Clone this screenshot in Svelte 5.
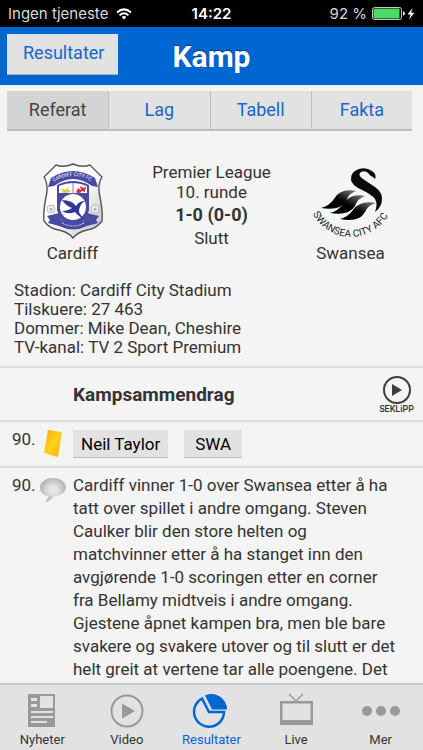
<script lang="ts">
  type Tab = { id: string; label: string };

  const sections: Tab[] = [
    { id: "referat", label: "Referat" },
    { id: "lag", label: "Lag" },
    { id: "tabell", label: "Tabell" },
    { id: "fakta", label: "Fakta" },
  ];

  const menu: Tab[] = [
    { id: "nyheter", label: "Nyheter" },
    { id: "video", label: "Video" },
    { id: "resultater", label: "Resultater" },
    { id: "live", label: "Live" },
    { id: "mer", label: "Mer" },
  ];

  const facts = [
    "Stadion: Cardiff City Stadium",
    "Tilskuere: 27 463",
    "Dommer: Mike Dean, Cheshire",
    "TV-kanal: TV 2 Sport Premium",
  ];

  let section = $state("referat");
  let page = $state("resultater");
</script>

<div class="app">
  <div class="status">
    <span class="carrier">
      Ingen tjeneste
      <svg width="16" height="12" viewBox="0 0 16 12" fill="none" stroke="#fff" stroke-width="2">
        <path d="M1 4.4Q8 -1.6 15 4.4" />
        <path d="M3.6 7.2Q8 3.4 12.4 7.2" />
        <path d="M5.6 9Q8 7 10.4 9L8 11.6Z" fill="#fff" stroke="none" />
      </svg>
    </span>
    <strong>14:22</strong>
    <span class="power">
      92 %
      <svg width="43" height="14" viewBox="0 0 43 14">
        <rect x="0.5" y="0.5" width="29" height="12" rx="2" fill="none" stroke="#c8c8c8" />
        <rect x="1.5" y="1.5" width="26" height="10" fill="#4cd964" />
        <path d="M31 4.2Q33 5 33 6.5T31 8.8Z" fill="#fff" />
        <path d="M40.5 1L35.5 7.4H38.6L37 12.4L42.4 5.8H39.2Z" fill="#fff" />
      </svg>
    </span>
  </div>

  <header>
    <button class="back">Resultater</button>
    <h1>Kamp</h1>
  </header>

  <main>
    <nav class="sections">
      {#each sections as s}
        <button class:active={section === s.id} onclick={() => (section = s.id)}>{s.label}</button>
      {/each}
    </nav>

    <section class="match">
      <div class="team">
        <svg width="62" height="76" viewBox="0 0 62 76">
          <defs>
            <linearGradient id="shield" x1="0" x2="1" y1="0" y2="1">
              <stop offset="0.5" stop-color="#fff" />
              <stop offset="1" stop-color="#b9b9bd" />
            </linearGradient>
            <path id="club" d="M10 20Q31 6 52 20" />
          </defs>
          <path
            d="M14 2Q22 5 31 1Q40 5 48 2L60 14Q55 22 58 34Q61 50 60 58Q54 66 45 67Q36 69 31 75Q26 69 17 67Q8 66 2 58Q1 50 4 34Q7 22 2 14Z"
            fill="url(#shield)" stroke="#55555a" stroke-width="1.4"
          />
          <path d="M9 15Q31 1 53 15L56 24L50 23Q31 9 12 23L6 24Z" fill="#4a4aa5" />
          <text font-size="5" fill="#fff"><textPath href="#club" startOffset="2">CARDIFF CITY FC</textPath></text>
          <path d="M15 22Q31 14 47 22V47Q45 59 31 65Q17 59 15 47Z" fill="#4a4aa5" />
          <path d="M17 23Q31 17 45 23V30H17Z" fill="#fff" />
          <path d="M31 20V31" stroke="#8080bd" />
          <path d="M19 25L24 27L27 23L26 27L30 28L25 30L21 30Z" fill="#d9d43b" />
          <path d="M34 29L36 25L39 27L38 23L42 25L44 23L43 29L40 28L37 31Z" fill="#d93443" />
          <circle cx="31" cy="44" r="13" fill="#fff" />
          <path
            d="M20 37Q30 37 34 43Q37 38 43 38Q39 40 38 44Q36 48 38 51L43 57Q36 53 33 49Q26 52 20 48Q26 48 30 45Q24 43 20 37Z"
            fill="#34349b"
          />
          <path d="M5 53L17 50L20 58Q31 64 42 58L45 50L57 53L54 57L56 60L45 63Q31 70 17 63L6 60L8 57Z" fill="#4a4aa5" />
          <path d="M20 60Q31 66 42 60" fill="none" stroke="#d7d7ef" stroke-dasharray="2 1" />
          <g fill="#f7f7f7" stroke="#b4b4ba">
            <circle cx="9" cy="46" r="4" />
            <circle cx="53" cy="46" r="4" />
          </g>
          <path d="M7 46L9 44L11 46L10 48H8ZM51 46L53 44L55 46L54 48H52Z" fill="#bbb" />
        </svg>
        <span>Cardiff</span>
      </div>

      <div class="result">
        <span>Premier League</span>
        <span>10. runde</span>
        <strong>1-0 (0-0)</strong>
        <span>Slutt</span>
      </div>

      <div class="team">
        <svg width="80" height="76" viewBox="0 0 80 76">
          <defs>
            <linearGradient id="wing" x1="1" x2="0" y1="0" y2="1">
              <stop offset="0.1" stop-color="#666" />
              <stop offset="0.5" stop-color="#000" />
            </linearGradient>
            <path id="arc" d="M1 49A43 43 0 0 0 79 49" />
          </defs>
          <path
            d="M64 16Q66 11 61 8Q55 4 48 6Q39 9 40 17Q41 22 49 26Q60 31 64 36Q67 41 64 49Q71 44 71 36Q71 29 64 24L52 16Q46 12 50 9Q55 7 58 11Q59 13 62 14Z"
            fill="#0a0a0a"
          />
          <path d="M10 45Q18 43 23 36Q29 25 45 28Q38 30 35 38Q30 48 10 45Z" fill="url(#wing)" />
          <path d="M19 50Q27 48 32 41Q39 30 54 33Q47 35 44 43Q38 53 19 50Z" fill="url(#wing)" />
          <path d="M29 56Q37 54 42 47Q49 37 65 40Q57 42 54 49Q48 60 29 56Z" fill="url(#wing)" />
          <text font-size="10" fill="#222"><textPath href="#arc" startOffset="2">SWANSEA CITY AFC</textPath></text>
        </svg>
        <span>Swansea</span>
      </div>
    </section>

    <ul class="facts">
      {#each facts as fact}
        <li>{fact}</li>
      {/each}
    </ul>

    <section class="summary">
      <h2>Kampsammendrag</h2>
      <button class="clip">
        <svg width="30" height="30" viewBox="0 0 30 30">
          <circle cx="15" cy="15" r="13" fill="none" stroke="#3c3c3c" stroke-width="2" />
          <path d="M10 9L20 15L10 21Z" fill="#3c3c3c" />
        </svg>
        <span>SEKLiPP</span>
      </button>
    </section>

    <article class="event">
      <span class="minute">90.</span>
      <svg width="26" height="28" viewBox="0 0 26 28">
        <defs>
          <linearGradient id="card" x1="0" x2="1" y1="0" y2="1">
            <stop offset="0" stop-color="#ffa800" />
            <stop offset="0.5" stop-color="#ffd21c" />
            <stop offset="1" stop-color="#ffae00" />
          </linearGradient>
        </defs>
        <path d="M8 0L22 2L18 27L4 23Z" fill="url(#card)" />
      </svg>
      <div class="tags">
        <button>Neil Taylor</button>
        <button>SWA</button>
      </div>
    </article>

    <article class="event comment">
      <span class="minute">90.</span>
      <svg width="26" height="28" viewBox="0 0 26 28">
        <defs>
          <radialGradient id="bubble">
            <stop offset="0.3" stop-color="#e6e6e6" />
            <stop offset="1" stop-color="#b4b4b4" />
          </radialGradient>
        </defs>
        <path
          d="M13 4C20 4 26 8 26 13C26 19 20 22 14 22Q11 27 5 28Q8 25 8 22C3 21 0 18 0 13C0 8 6 4 13 4Z"
          fill="url(#bubble)"
        />
      </svg>
      <p>
        Cardiff vinner 1-0 over Swansea etter å ha tatt over spillet i andre omgang. Steven Caulker
        blir den store helten og matchvinner etter å ha stanget inn den avgjørende 1-0 scoringen
        etter en corner fra Bellamy midtveis i andre omgang. Gjestene åpnet kampen bra, men ble bare
        svakere og svakere utover og til slutt er det helt greit at vertene tar alle poengene. Det
        var lenge mellom sjansene i en kamp hvor
      </p>
    </article>
  </main>

  <nav class="menu">
    {#each menu as m}
      <button class:active={page === m.id} onclick={() => (page = m.id)}>
        <svg width="40" height="36" viewBox="0 0 40 36">
          {#if m.id === "nyheter"}
            <path
              d="M6 2H33V35H6ZM9 6V9H15V6ZM9 12V15H15V12ZM18 4V16H31V4ZM9 19V21H31V19ZM9 24V26H31V24ZM9 29V31H25V29Z"
              fill="#999" fill-rule="evenodd"
            />
          {:else if m.id === "video"}
            <circle cx="20" cy="19" r="15.5" fill="none" stroke="#999" stroke-width="2" />
            <path d="M15 11.5L28 19L15 26.5Z" fill="#999" />
          {:else if m.id === "resultater"}
            <path d="M11 6.5A15 15 0 1 0 33 20H18Z" fill="none" stroke="#0066d2" stroke-width="2.5" />
            <path d="M14 3.5A15.5 15.5 0 0 1 36 17.5H21Z" fill="#0066d2" />
          {:else if m.id === "live"}
            <path d="M13 2L20 9L27 2" fill="none" stroke="#999" stroke-width="1.5" />
            <path d="M4 9H37V33H4ZM6.5 11.5V28H34.5V11.5Z" fill="#999" fill-rule="evenodd" />
          {:else}
            <g fill="#999">
              <circle cx="6" cy="19" r="5" />
              <circle cx="20" cy="19" r="5" />
              <circle cx="34" cy="19" r="5" />
            </g>
          {/if}
        </svg>
        <span>{m.label}</span>
      </button>
    {/each}
  </nav>
</div>

<style>
  :global(body) {
    margin: 0;
  }

  .app {
    display: flex;
    flex-direction: column;
    height: 100vh;
    background: #f4f4f4;
    color: #333;
    font-family: Roboto, sans-serif;
    font-size: 17px;
  }
  button {
    border: 0;
    padding: 0;
    font: inherit;
    color: #1767c8;
    background: #e2e2e2;
    cursor: pointer;
  }
  svg {
    flex: none;
  }

  .status {
    display: grid;
    grid-template-columns: 1fr auto 1fr;
    align-items: center;
    flex: none;
    height: 27px;
    padding: 0 8px;
    background: #000;
    color: #fff;
    font-family: Inter, sans-serif;
    font-size: 15px;
  }
  .carrier,
  .power {
    display: flex;
    align-items: center;
    gap: 8px;
    color: #d8d8d8;
  }
  .power {
    justify-content: flex-end;
    gap: 5px;
  }
  .status strong {
    font-weight: 600;
  }

  header {
    display: grid;
    grid-template-columns: 1fr auto 1fr;
    align-items: center;
    flex: none;
    height: 58px;
    padding: 0 7px;
    background: #0066d2;
  }
  .back {
    justify-self: start;
    height: 41px;
    margin-bottom: 3px;
    padding: 0 14px 4px 16px;
    border-bottom: 1px solid #aaa;
    font-size: 18px;
  }
  h1 {
    margin: 0;
    color: #fff;
    font-size: 30px;
    font-weight: 700;
    text-shadow: 0 -1px 1px #003a80;
  }

  main {
    flex: 1;
    min-height: 0;
    overflow-y: auto;
    scrollbar-width: none;
  }
  .sections {
    display: grid;
    grid-template-columns: repeat(4, 1fr);
    margin: 6px 11px 0 7px;
  }
  .sections button {
    height: 40px;
    padding-bottom: 2px;
    border-bottom: 2px solid #bdbdbd;
    font-size: 18px;
  }
  .sections button + button {
    border-left: 1px solid #bdbdbd;
  }
  .sections .active {
    background: #d4d4d4;
    color: #444;
  }

  .match {
    display: grid;
    grid-template-columns: 1fr 1fr 1fr;
    padding: 31px 3px 0;
  }
  .team,
  .result {
    display: flex;
    flex-direction: column;
    align-items: center;
    line-height: 20px;
  }
  .team {
    gap: 4px;
    padding-top: 1px;
  }
  .result strong {
    font-size: 18px;
    line-height: 26px;
  }

  .facts {
    list-style: none;
    margin: 0;
    padding: 18px 14px 9px;
    line-height: 19px;
  }

  .summary {
    display: flex;
    align-items: center;
    justify-content: space-between;
    height: 52px;
    padding: 0 9px 0 73px;
    border-top: 2px solid #ddd;
  }
  h2 {
    margin: 0;
    font-size: 19px;
    font-weight: 700;
  }
  .clip {
    display: flex;
    flex-direction: column;
    align-items: center;
    background: none;
    color: #333;
    font-size: 9px;
    font-weight: 500;
    line-height: 9px;
  }

  .event {
    display: grid;
    grid-template-columns: 28px 26px 1fr;
    padding: 8px 24px 8px 12px;
    border-top: 2px solid #ddd;
  }
  .minute {
    line-height: 18px;
  }
  .tags {
    display: flex;
    gap: 16px;
    padding-left: 7px;
  }
  .tags button {
    height: 28px;
    padding: 0 8px;
    border-bottom: 1px solid #bbb;
    color: #000;
  }
  .tags button + button {
    padding: 0 11px;
  }
  .comment p {
    margin: 0;
    padding-left: 7px;
    line-height: 23px;
  }
  .comment {
    padding-top: 6px;
  }
  .comment .minute {
    line-height: 23px;
  }

  .menu {
    display: grid;
    grid-template-columns: repeat(5, 1fr);
    flex: none;
    height: 67px;
    border-top: 2px solid #c8c8c8;
    box-sizing: border-box;
    background: #e2e2e2;
  }
  .menu button {
    display: flex;
    flex-direction: column;
    align-items: center;
    gap: 4px;
    padding-top: 7px;
    background: none;
    color: #333;
    font-size: 13px;
    line-height: 16px;
  }
  .menu .active {
    color: #0066d2;
  }
</style>
